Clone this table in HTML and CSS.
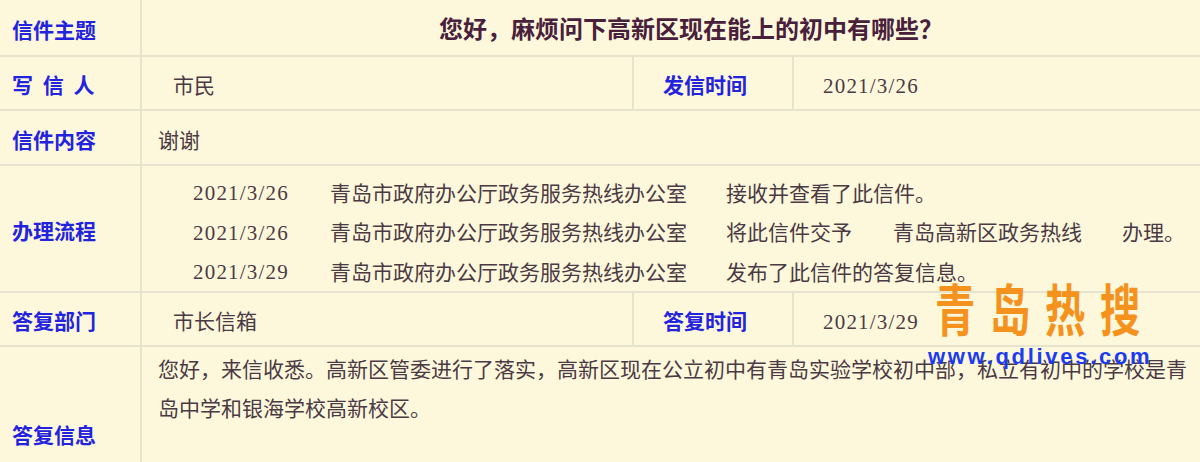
FILE: index.html
```html
<!DOCTYPE html>
<html lang="zh-CN">
<head>
<meta charset="utf-8">
<title>信件详情</title>
<link rel="stylesheet" href="styles.css">
</head>
<body>
<div class="page">
  <div class="letter">
    <div class="label">信件主题</div>
    <div class="title">您好，麻烦问下高新区现在能上的初中有哪些？</div>

    <div class="label spaced">写 信 人</div>
    <div class="value indent">市民</div>
    <div class="label mid">发信时间</div>
    <div class="value indent num">2021/3/26</div>

    <div class="label">信件内容</div>
    <div class="value wide">谢谢</div>

    <div class="label">办理流程</div>
    <div class="flow wide">
      <div class="flow-line"><span class="flow-date num">2021/3/26</span><span class="flow-org">青岛市政府办公厅政务服务热线办公室</span><span>接收并查看了此信件。</span></div>
      <div class="flow-line"><span class="flow-date num">2021/3/26</span><span class="flow-org">青岛市政府办公厅政务服务热线办公室</span><span class="flow-seg1">将此信件交予</span><span class="flow-seg2">青岛高新区政务热线</span><span>办理。</span></div>
      <div class="flow-line"><span class="flow-date num">2021/3/29</span><span class="flow-org">青岛市政府办公厅政务服务热线办公室</span><span>发布了此信件的答复信息。</span></div>
    </div>

    <div class="label">答复部门</div>
    <div class="value indent">市长信箱</div>
    <div class="label mid">答复时间</div>
    <div class="value indent num">2021/3/29</div>

    <div class="label low">答复信息</div>
    <div class="reply wide">您好，来信收悉。高新区管委进行了落实，高新区现在公立初中有青岛实验学校初中部，私立有初中的学校是青岛中学和银海学校高新校区。</div>
  </div>

  <div class="watermark">
    <div class="wm-title">青岛热搜</div>
    <div class="wm-url">www.qdlives.com</div>
  </div>
</div>
</body>
</html>
```

FILE: styles.css
```css
html, body {
  margin: 0;
  padding: 0;
  background: #fdf8dc;
}

body {
  font-family: "Liberation Serif", "Noto Sans CJK SC", serif;
  color: #4b3a44;
  overflow: hidden;
}

.page {
  position: relative;
  width: 1200px;
  height: 462px;
  overflow: hidden;
}

.letter {
  display: grid;
  grid-template-columns: 140px 490px 158px 406px;
  grid-template-rows: 55px 52px 53px 125px 52px 115px;
  gap: 2px;
  background: #e6e4cc;
}

.letter > div {
  background: #fdf8dc;
}

.label {
  display: flex;
  align-items: center;
  padding-left: 12px;
  padding-top: 2px;
  font-family: "Noto Sans CJK SC", sans-serif;
  font-weight: 700;
  font-size: 21px;
  color: #2323de;
}

.label.spaced {
  word-spacing: 5px;
}

.label.mid {
  padding-left: 29px;
}

.label.low {
  padding-top: 58px;
}

.title {
  grid-column: 2 / 5;
  display: flex;
  align-items: center;
  justify-content: center;
  padding-left: 40px;
  font-size: 24px;
  font-weight: 700;
  color: #48203b;
}

.value {
  display: flex;
  align-items: center;
  padding-top: 2px;
  font-size: 21px;
}

.value.indent {
  padding-left: 31px;
}

.value.num {
  padding-left: 29px;
  padding-top: 6px;
}

.wide {
  grid-column: 2 / 5;
}

.value.wide {
  padding-left: 16px;
}

.num {
  letter-spacing: 1.2px;
}

.flow {
  padding: 6px 0 0 51px;
  font-size: 21px;
}

.flow-line {
  display: flex;
  align-items: center;
  height: 39.5px;
  white-space: nowrap;
}

.flow-date {
  width: 137px;
  flex: none;
  padding-top: 4px;
}

.flow-org {
  width: 396px;
  flex: none;
}

.flow-seg1 {
  width: 167px;
  flex: none;
}

.flow-seg2 {
  width: 229px;
  flex: none;
}

.reply {
  padding: 4px 5px 0 16px;
  font-size: 21px;
  line-height: 39px;
}

.watermark {
  position: absolute;
  left: 928px;
  top: 279px;
  pointer-events: none;
}

.wm-title {
  margin-left: 7px;
  font-family: "Noto Sans CJK SC", sans-serif;
  font-weight: 700;
  font-size: 56px;
  line-height: 56px;
  letter-spacing: 20.4px;
  color: #f5921e;
  white-space: nowrap;
  transform: scaleX(0.72);
  transform-origin: left top;
}

.wm-url {
  margin-top: 11px;
  font-family: "Liberation Sans", sans-serif;
  font-weight: 700;
  font-size: 22px;
  line-height: 22px;
  letter-spacing: 2.7px;
  color: #1b3bf2;
  white-space: nowrap;
}
```
